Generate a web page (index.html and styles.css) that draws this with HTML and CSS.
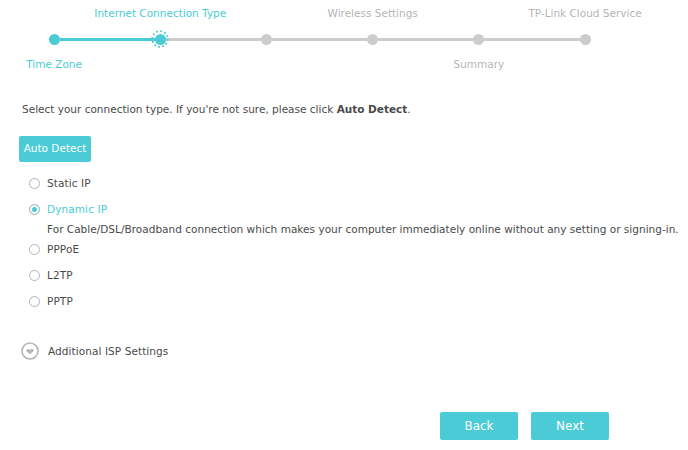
FILE: index.html
```html
<!DOCTYPE html>
<html lang="en">
<head>
<meta charset="utf-8">
<title>Quick Setup</title>
<link rel="stylesheet" href="styles.css">
</head>
<body>
<main class="page">
  <section class="stepper">
    <div class="labels labels-top">
      <span class="label"></span>
      <span class="label active">Internet Connection Type</span>
      <span class="label"></span>
      <span class="label">Wireless Settings</span>
      <span class="label"></span>
      <span class="label">TP-Link Cloud Service</span>
    </div>
    <div class="track">
      <span class="dot done"></span><span class="line done"></span>
      <span class="dot done current">
        <svg class="ring" width="18" height="18" viewBox="0 0 18 18" aria-hidden="true">
          <circle cx="9" cy="9" r="7.800" fill="none" stroke="#4acbd6" stroke-width="1.800" stroke-dasharray="1.800 2.283"/>
        </svg>
      </span><span class="line"></span>
      <span class="dot"></span><span class="line"></span>
      <span class="dot"></span><span class="line"></span>
      <span class="dot"></span><span class="line"></span>
      <span class="dot"></span>
    </div>
    <div class="labels labels-bottom">
      <span class="label active">Time Zone</span>
      <span class="label"></span>
      <span class="label"></span>
      <span class="label"></span>
      <span class="label">Summary</span>
      <span class="label"></span>
    </div>
  </section>
  <p class="intro">Select your connection type. If you're not sure, please click <b>Auto Detect</b>.</p>
  <button class="btn detect" type="button">Auto Detect</button>
  <ul class="options">
    <li class="option"><span class="radio"></span><span>Static IP</span></li>
    <li class="option selected"><span class="radio"></span><span>Dynamic IP</span></li>
    <li class="desc">For Cable/DSL/Broadband connection which makes your computer immediately online without any setting or signing-in.</li>
    <li class="option"><span class="radio"></span><span>PPPoE</span></li>
    <li class="option"><span class="radio"></span><span>L2TP</span></li>
    <li class="option"><span class="radio"></span><span>PPTP</span></li>
  </ul>
  <div class="additional">
    <svg class="chev" width="18" height="18" viewBox="0 0 18 18" aria-hidden="true">
      <circle cx="9" cy="9" r="8" fill="none" stroke="#b5b5b5" stroke-width="1.600"/>
      <path d="M5.500 7.800c.9-1.100 2.400-.9 3.500.2 1.100-1.100 2.600-1.300 3.500-.2.700 1-.2 2-3.500 4.400-3.300-2.400-4.200-3.400-3.500-4.400z" fill="#b5b5b5"/>
    </svg>
    <span>Additional ISP Settings</span>
  </div>
  <div class="actions">
    <button class="btn wide" type="button">Back</button>
    <button class="btn wide" type="button">Next</button>
  </div>
</main>
</body>
</html>
```
FILE: styles.css
```css
* { box-sizing: border-box; }
html, body { margin: 0; padding: 0; background: #fff; }
body {
  width: 688px;
  height: 450px;
  overflow: hidden;
  font-family: "DejaVu Sans", Verdana, sans-serif;
  font-size: 10.5px;
  color: #4a4a4a;
}
.page { padding: 0 0 0 19px; }
.stepper { padding-top: 6px; margin-left: -18px; width: 640px; }
.labels { display: grid; grid-template-columns: repeat(6, 106.2px); justify-items: center; height: 14px; line-height: 14px; }
.label { white-space: nowrap; color: #b5b5b5; }
.label.active { color: #4acbd6; }
.track { display: flex; align-items: center; height: 12px; margin: 13px 0 12px 47.6px; }
.dot { flex: none; width: 11px; height: 11px; border-radius: 50%; background: #cccccc; }
.dot.done { background: #4acbd6; }
.dot.current { position: relative; }
.ring { position: absolute; left: -3.5px; top: -3.5px; }
.line { flex: none; width: 95.2px; height: 3px; background: #cccccc; }
.line.done { background: #4acbd6; }
.intro { margin: 0; padding: 31px 0 0 3px; line-height: 14px; }
.btn {
  border: 0;
  border-radius: 2px;
  background: #4acbd6;
  color: #fff;
  font: inherit;
  padding: 0;
}
.detect { display: block; width: 72px; height: 26px; margin-top: 20px; padding-bottom: 2px; }
.options { list-style: none; margin: 0; padding: 8px 0 0 10px; }
.option { display: flex; align-items: center; gap: 7px; height: 26px; letter-spacing: .1px; }
.option.selected { color: #4acbd6; }
.radio { flex: none; width: 11px; height: 11px; border: 1px solid #b4b4b4; border-radius: 50%; background: #fff; }
.selected .radio { background: #4acbd6; box-shadow: inset 0 0 0 2px #fff; }
.desc { padding-left: 18px; height: 14px; line-height: 14px; white-space: nowrap; letter-spacing: .018px; }
.additional { display: flex; align-items: center; gap: 9.5px; margin-top: 27px; height: 20px; padding-left: 1.5px; letter-spacing: .08px; }
.chev { flex: none; }
.actions { display: flex; gap: 13px; margin: 51px 0 0 421px; }
.wide { width: 78px; height: 28px; font-size: 12px; }
```
